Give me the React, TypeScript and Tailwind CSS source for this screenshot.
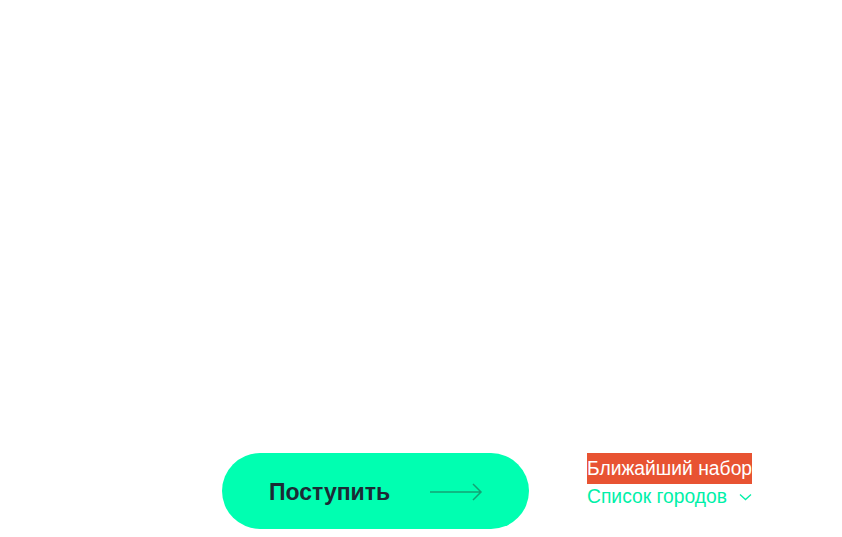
export default function App() {
  return (
    <div className="w-[842px] h-[537px] bg-white overflow-hidden" style={{ fontFamily: '"Liberation Sans", Arial, sans-serif' }}>
      <div className="flex items-start pt-[453px] pl-[222px]">
        <button className="flex items-center w-[307px] h-[76px] rounded-full bg-[#00ffb1] pl-[47px] pt-[2px]">
          <span className="text-[23px] font-bold text-[#1b2b35] leading-none">Поступить</span>
          <svg className="ml-[39px]" width="54" height="20" viewBox="0 0 54 20" fill="none">
            <path d="M1 10H52M44 2L52 10L44 18" stroke="#1b7a5a" strokeOpacity="0.7" strokeWidth="1.5" />
          </svg>
        </button>
        <div className="ml-[58px] flex flex-col items-start">
          <span className="bg-[#e85332] text-white text-[19.3px] leading-[31px] h-[31px] block">Ближайший набор</span>
          <div className="flex items-center text-[#00f0a8] text-[19.3px] leading-[26px]">
            <span>Список городов</span>
            <svg className="ml-[12px]" width="13" height="8" viewBox="0 0 13 8" fill="none">
              <path d="M1 1.5L6.5 6.5L12 1.5" stroke="#00f0a8" strokeWidth="1.3" />
            </svg>
          </div>
        </div>
      </div>
    </div>
  );
}
